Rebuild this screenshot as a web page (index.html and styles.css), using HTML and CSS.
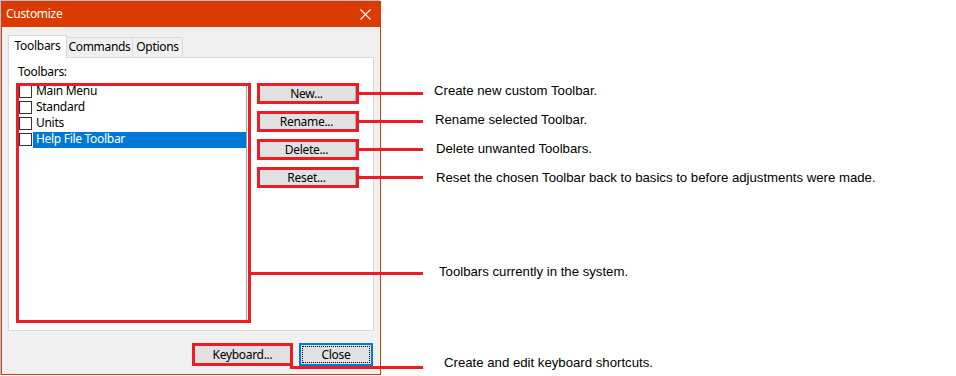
FILE: index.html
```html
<!DOCTYPE html>
<html lang="en">
  <head>
    <meta charset="UTF-8" />
    <title>Customize - Toolbars</title>
    <link rel="stylesheet" href="styles.css">
  </head>

  <body>
    <div class="page">
      <div class="window">
        <div class="titlebar">
          <span class="title">Customize</span>
          <svg class="close-x" width="11" height="11" viewBox="0 0 11 11">
            <path d="M0.5 0.5 L10.5 10.5 M10.5 0.5 L0.5 10.5" stroke="#fff" stroke-width="1.1" fill="none" />
          </svg>
        </div>

        <div class="client">
          <div class="tabs">
            <div class="tab active">Toolbars</div>
            <div class="tab tab-commands">Commands</div>
            <div class="tab tab-options">Options</div>
          </div>

          <div class="panel">
            <div class="field-label">Toolbars:</div>
            <div class="panel-row">
              <div class="listbox mark">
                <div class="item"><span class="check"></span><span class="item-text">Main Menu</span></div>
                <div class="item"><span class="check"></span><span class="item-text">Standard</span></div>
                <div class="item"><span class="check"></span><span class="item-text">Units</span></div>
                <div class="item selected"><span class="check"></span><span class="item-text">Help File Toolbar</span></div>
                <span class="lead lead-list"></span>
              </div>

              <div class="side-buttons">
                <div class="mark"><button class="btn">New...</button><span class="lead lead-btn"></span></div>
                <div class="mark"><button class="btn">Rename...</button><span class="lead lead-btn"></span></div>
                <div class="mark"><button class="btn">Delete...</button><span class="lead lead-btn"></span></div>
                <div class="mark"><button class="btn">Reset...</button><span class="lead lead-btn"></span></div>
              </div>
            </div>
          </div>

          <div class="footer">
            <div class="mark mark-keyboard"><button class="btn">Keyboard...</button><span class="lead lead-keyboard"></span></div>
            <button class="btn btn-default">Close</button>
          </div>
        </div>
      </div>

      <div class="notes">
        <div class="note n1">Create new custom Toolbar.</div>
        <div class="note n2">Rename selected Toolbar.</div>
        <div class="note n3">Delete unwanted Toolbars.</div>
        <div class="note n4">Reset the chosen Toolbar back to basics to before adjustments were made.</div>
        <div class="note n5">Toolbars currently in the system.</div>
        <div class="note n6">Create and edit keyboard shortcuts.</div>
      </div>
    </div>
  </body>
</html>
```

FILE: styles.css
```css
body {
  margin: 0;
  background: #fff;
  font-family: "Noto Sans", sans-serif;
  font-size: 12px;
  letter-spacing: -0.3px;
  color: #000;
}

.page {
  display: flex;
  align-items: flex-start;
}

/* dialog frame */
.window {
  box-sizing: border-box;
  width: 380px;
  height: 374px;
  margin: 1px 0 0 1px;
  border: 1px solid #da3b01;
  background: #f0f0f0;
  box-shadow: -1px -1px 0 #b3bfd6, -1px 1px 0 #b3bfd6;
  display: flex;
  flex-direction: column;
}

.titlebar {
  height: 25px;
  background: #da3b01;
  color: #fff;
  display: flex;
  justify-content: space-between;
  align-items: flex-start;
  padding: 0 9px 0 4px;
  line-height: 23px;
}

.close-x {
  margin-top: 7px;
}

.client {
  flex: 1;
  padding: 8px 6px 0 6px;
}

/* tabs */
.tabs {
  display: flex;
  align-items: flex-end;
  height: 22px;
}

.tab {
  box-sizing: border-box;
  height: 20px;
  border: 1px solid #d9d9d9;
  border-bottom: none;
  border-left: none;
  background: #f0f0f0;
  text-align: center;
  line-height: 16px;
  padding-top: 1px;
}

.tab.active {
  width: 59px;
  height: 23px;
  margin-bottom: -1px;
  border-left: 1px solid #d9d9d9;
  background: #fff;
  padding-top: 2px;
  position: relative;
}

.tab-commands {
  width: 66px;
}

.tab-options {
  width: 50px;
}

.panel {
  box-sizing: border-box;
  width: 366px;
  height: 274px;
  border: 1px solid #d9d9d9;
  background: #fff;
  padding: 6px 0 0 7px;
}

.field-label {
  line-height: 16px;
  margin: 0 0 3px 2px;
}

.panel-row {
  display: flex;
  align-items: flex-start;
}

/* list of toolbars */
.listbox {
  box-sizing: border-box;
  width: 231px;
  height: 239px;
  border: 1px solid #a0a0a0;
  background: #fff;
}

.item {
  display: flex;
  height: 16px;
  padding-left: 2px;
}

.check {
  box-sizing: border-box;
  width: 13px;
  height: 13px;
  margin: 1px 1px 0 0;
  border: 1px solid #333;
  background: #fff;
}

.item-text {
  flex: 1;
  padding-left: 3px;
  line-height: 13px;
}

.item.selected .item-text {
  background: #0078d7;
  color: #fff;
}

.side-buttons {
  margin-left: 10px;
  display: flex;
  flex-direction: column;
  gap: 7px;
}

.side-buttons .mark {
  width: 102px;
  height: 21px;
}

.btn {
  display: block;
  box-sizing: border-box;
  height: 100%;
  padding: 0;
  font: inherit;
  letter-spacing: inherit;
  color: #000;
  background: #e1e1e1;
  border: 1px solid #adadad;
}

.side-buttons .btn {
  width: 99px;
}

.footer {
  display: flex;
  justify-content: flex-end;
  gap: 6px;
  margin-top: 12px;
  padding-right: 1px;
}

.mark-keyboard {
  width: 101px;
  height: 23px;
}

.mark-keyboard .btn {
  width: 100%;
}

.btn-default {
  width: 74px;
  height: 23px;
  border: 2px solid #0078d7;
  outline: 1px dotted #000;
  outline-offset: -4px;
}

/* red annotation boxes and leader lines */
.mark {
  position: relative;
}

.mark::after {
  content: "";
  position: absolute;
  inset: 0;
  border: 3px solid #ed1c24;
}

.listbox.mark::after {
  inset: auto;
  left: -1px;
  top: -1px;
  box-sizing: border-box;
  width: 235px;
  height: 240px;
}

.lead {
  position: absolute;
  height: 3px;
  background: #ed1c24;
  z-index: 1;
}

.lead-btn {
  top: 9px;
  left: 101px;
  width: 65px;
}

.lead-list {
  top: 188px;
  left: 233px;
  width: 173px;
}

.lead-keyboard {
  top: 23px;
  left: 98px;
  width: 133px;
}

/* callout texts */
.notes {
  padding-top: 83px;
  font-family: "Liberation Sans", Arial, sans-serif;
  font-size: 13.2px;
  letter-spacing: 0;
  line-height: 16px;
  white-space: nowrap;
}

.n1 { padding-left: 53px; }
.n2 { margin-top: 13px; padding-left: 54px; }
.n3 { margin-top: 13px; padding-left: 55px; }
.n4 { margin-top: 13px; padding-left: 55px; }
.n5 { margin-top: 78px; padding-left: 58px; }
.n6 { margin-top: 75px; padding-left: 63px; }
```
